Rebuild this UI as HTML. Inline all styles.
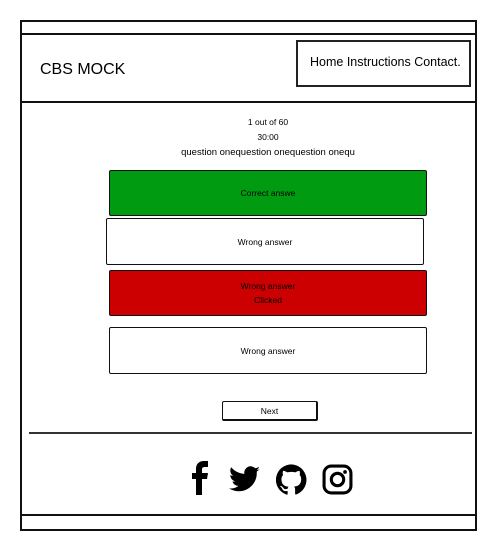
<!DOCTYPE html>
<html><head><meta charset="utf-8"><style>
*{margin:0;padding:0;box-sizing:border-box}
body{width:496px;height:548px;background:#fff;position:relative;font-family:"Liberation Sans",sans-serif;color:#000;overflow:hidden}
.a{position:absolute}
.box{position:absolute;border:1.5px solid #111;border-radius:2px;display:flex;align-items:center;justify-content:center;text-align:center;font-size:8.5px;line-height:14px}
.t{position:absolute;left:0;width:496px;text-align:center;font-size:8.5px}
</style></head><body>
<div class="a" style="left:20px;top:20px;width:457px;height:511px;border:2px solid #111"></div>
<div class="a" style="left:20px;top:33px;width:457px;height:2px;background:#111"></div>
<div class="a" style="left:20px;top:101px;width:457px;height:2px;background:#111"></div>
<div class="a" style="left:20px;top:514px;width:457px;height:2px;background:#111"></div>
<div class="a" style="left:40px;top:61px;font-size:16px">CBS MOCK</div>
<div class="a" style="left:296px;top:40px;width:175px;height:47px;border:2px solid #222;border-bottom-width:2.5px;border-right-width:2.5px;font-size:12.5px;padding:13px 0 0 12px">Home Instructions Contact.</div>
<div class="t" style="top:117px;left:20px">1 out of 60</div>
<div class="t" style="top:132px;left:20px">30:00</div>
<div class="t" style="top:147px;left:20px;font-size:9.5px">question onequestion onequestion onequ</div>
<div class="box" style="left:109px;top:170px;width:318px;height:46px;background:#009b10">Correct answe</div>
<div class="box" style="left:106px;top:218px;width:318px;height:47px;background:#fff">Wrong answer</div>
<div class="box" style="left:109px;top:270px;width:318px;height:46px;background:#cc0000"><div>Wrong answer<br>Clicked</div></div>
<div class="box" style="left:109px;top:327px;width:318px;height:47px;background:#fff">Wrong answer</div>
<div class="box" style="left:222px;top:401px;width:96px;height:20px;border-right-width:2.5px;border-bottom-width:2.5px">Next</div>
<div class="a" style="left:29px;top:432px;width:443px;height:1.5px;background:#333"></div>
<svg class="a" style="left:190px;top:461px" width="20" height="34" viewBox="0 0 20 34"><path d="M6 34V18H2v-6h4V8c0-5 3-8 8-8h4v6h-3c-2 0-3 1-3 2v4h6l-1 6h-5v16z" fill="#000"/></svg>
<svg class="a" style="left:229px;top:465px" width="31" height="28" viewBox="0 0 24 20"><path d="M24 2.4c-.9.4-1.8.6-2.8.8 1-.6 1.8-1.6 2.2-2.7-1 .6-2 1-3.1 1.2A4.9 4.9 0 0 0 11.9 6C7.8 5.8 4.2 3.9 1.7.9.4 3.1 1 6 3.2 7.5c-.8 0-1.6-.2-2.2-.6 0 2.4 1.7 4.400 3.9 4.9-.7.2-1.5.2-2.2.1.6 2 2.4 3.4 4.6 3.4A9.9 9.9 0 0 1 0 17.3 14 14 0 0 0 21.5 4.9V4.3c1-.7 1.8-1.5 2.5-1.9z" fill="#000"/></svg>
<svg class="a" style="left:276px;top:464px" width="31" height="31" viewBox="0 0 24 24"><path d="M12 .3a12 12 0 0 0-3.8 23.4c.6.1.8-.3.8-.6v-2.2c-3.3.7-4-1.4-4-1.4-.6-1.4-1.4-1.8-1.4-1.8-1-.7.1-.7.1-.7 1.2.1 1.800 1.2 1.8 1.2 1 1.8 2.8 1.3 3.5 1 0-.8.4-1.3.7-1.6-2.7-.3-5.5-1.3-5.5-6 0-1.2.5-2.3 1.3-3.100-.2-.4-.6-1.600 0-3.200 0 0 1-.3 3.4 1.2a11.5 11.5 0 0 1 6 0c2.300-1.5 3.300-1.2 3.300-1.2.6 1.6.2 2.8.1 3.2.8.8 1.2 1.9 1.2 3.1 0 4.6-2.8 5.6-5.5 5.9.5.4.8 1.1.8 2.2v3.3c0 .3.2.7.8.6A12 12 0 0 0 12 .3" fill="#000"/></svg>
<svg class="a" style="left:322px;top:464px" width="31" height="31" viewBox="0 0 30 30"><rect x="2" y="2" width="26" height="26" rx="7" fill="none" stroke="#000" stroke-width="3"/><circle cx="15" cy="15" r="6" fill="none" stroke="#000" stroke-width="3"/><circle cx="22.3" cy="7.7" r="1.8" fill="#000"/></svg>
</body></html>
